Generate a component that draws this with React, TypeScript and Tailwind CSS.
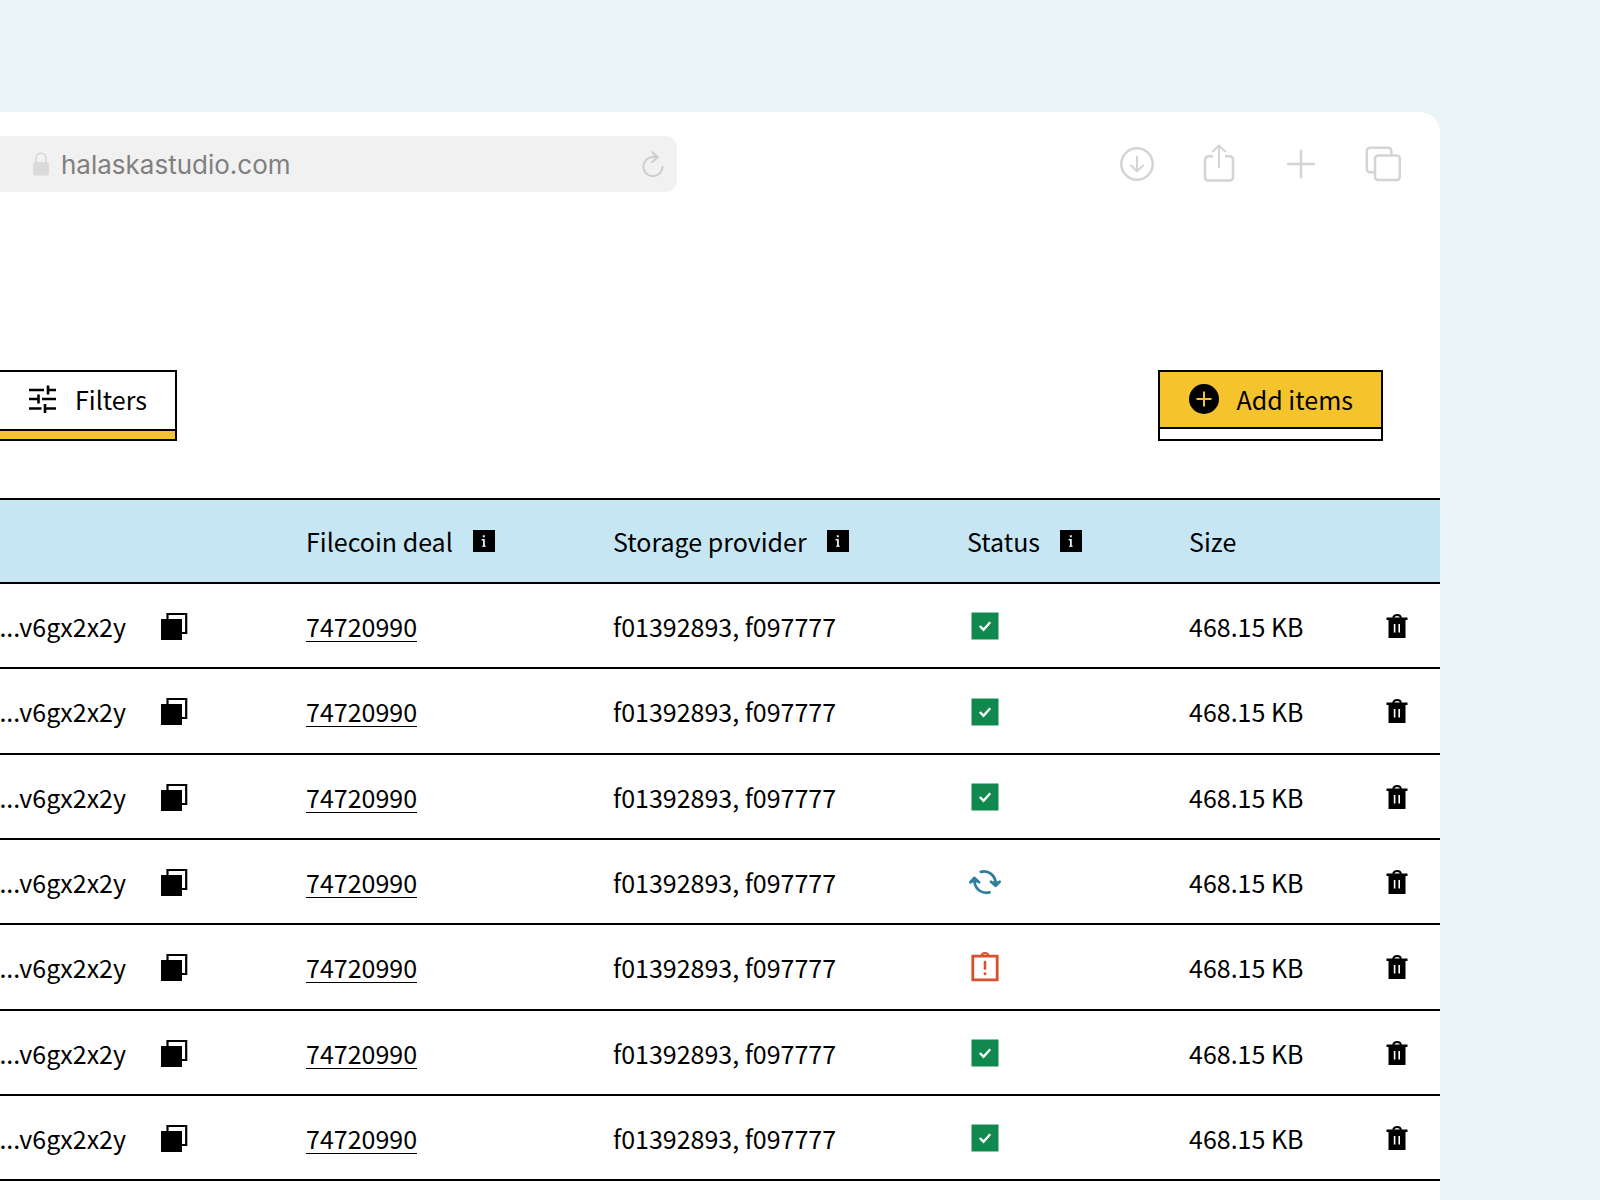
import type { ReactNode } from "react"

type Status = "stored" | "syncing" | "failed"

const ROWS: { id: number; status: Status }[] = [
  { id: 1, status: "stored" },
  { id: 2, status: "stored" },
  { id: 3, status: "stored" },
  { id: 4, status: "syncing" },
  { id: 5, status: "failed" },
  { id: 6, status: "stored" },
  { id: 7, status: "stored" },
]

function ToolButton({ label, children }: { label: string; children: ReactNode }) {
  return (
    <button type="button" aria-label={label} className="text-[#d4d4d4]">
      <svg width="40" height="40" viewBox="0 0 40 40" fill="none" stroke="currentColor"
        strokeWidth="2.5" strokeLinecap="round" strokeLinejoin="round">
        {children}
      </svg>
    </button>
  )
}

function BrowserBar() {
  return (
    <header className="flex items-center justify-between py-6">
      <div className="flex h-14 w-[47%] items-center rounded-r-[12px] bg-[#f1f1f1] pl-[33px] pr-3">
        <svg width="16" height="24" viewBox="0 0 16 24" fill="none" className="shrink-0">
          <path d="M3 11V6.5C3 3.4 5 1.2 8 1.2s5 2.2 5 5.3V11" stroke="#dadada" strokeWidth="1.8" />
          <rect y="10" width="16" height="13.5" rx="2" fill="#dadada" />
        </svg>
        <input aria-label="Address" defaultValue="halaskastudio.com"
          className="ml-3 min-w-0 flex-1 bg-transparent pt-0.5 font-['Inter',sans-serif] text-[26px] leading-8 text-[#808080] outline-none" />
        <button type="button" aria-label="Reload">
          <svg width="24" height="28" viewBox="0 0 24 28" fill="none" stroke="#cdcdcd"
            strokeWidth="2" strokeLinecap="round" strokeLinejoin="round">
            <path d="M21.5 16.8A9.6 9.6 0 1 1 12 7h4.5" />
            <path d="M11.5 2.2l5.2 4.8-5.6 5.2" />
          </svg>
        </button>
      </div>
      <div className="flex gap-[42px] pr-[37px]">
        <ToolButton label="Downloads">
          <circle cx="20" cy="20" r="15.7" />
          <path d="M20 12.5v14.6M14 21.5l6 5.8 6-5.8" strokeWidth="2" />
        </ToolButton>
        <ToolButton label="Share">
          <path d="M14 12.2H9.5A3.5 3.5 0 0 0 6 15.700v17.600a3.200 3.200 0 0 0 3.200 3.200h21.600a3.200 3.200 0 0 0 3.200-3.200V15.700a3.500 3.500 0 0 0-3.500-3.500H26" strokeLinecap="butt" />
          <path d="M20 23.500V1.500M13.800 7.500L20 1.500l6.200 6" strokeWidth="2" />
        </ToolButton>
        <ToolButton label="New tab">
          <path d="M20 7v26M7 20h26" />
        </ToolButton>
        <ToolButton label="Tabs">
          <rect x="12" y="11.500" width="24.800" height="24.600" rx="3" />
          <path d="M11.800 28.200H7A3.200 3.200 0 0 1 3.800 25V7A3.200 3.200 0 0 1 7 3.800h18.200A3.200 3.200 0 0 1 28.400 7v4.200" />
        </ToolButton>
      </div>
    </header>
  )
}

function InfoIcon() {
  return (
    <svg width="22" height="22" viewBox="0 0 22 22" className="shrink-0">
      <path d="M0 0h22v22H0z" />
      <path d="M9.800 5.200h2v2h-2zM8.600 9h3.200v7.600H10v-6H8.600z" fill="#e3f2f9" />
      <path d="M9.200 15.600h3.400v1.200H9.200z" fill="#e3f2f9" />
    </svg>
  )
}

function CopyIcon() {
  return (
    <svg width="28" height="28" viewBox="0 0 28 28">
      <path d="M1 7h21v21H1z" />
      <path d="M7.500 7V2h18.700v19H21" fill="none" stroke="#000" strokeWidth="2.200" />
    </svg>
  )
}

function TrashIcon() {
  return (
    <svg width="22" height="26" viewBox="0 0 22 26">
      <path d="M7.200 5.200C7.200 3.200 9 2 11 2s3.800 1.200 3.800 3.200" fill="none" stroke="#000" strokeWidth="2" />
      <path d="M0.500 4.600h21V7h-2v18h-17V7h-2z" />
      <path d="M8.600 11v8.500M13.200 11v8.500" stroke="#fff" strokeWidth="1.600" />
    </svg>
  )
}

function StatusIcon({ status }: { status: Status }) {
  if (status === "syncing") {
    return (
      <svg width="32" height="26" viewBox="0 0 32 26" fill="none" stroke="#2f7f9c" strokeWidth="2.800"
        strokeLinecap="round" strokeLinejoin="round" role="img" aria-label="Syncing">
        <path d="M11.800 2.800C19.500 1 26.600 6 26.600 15" />
        <path d="M22 12.800l4.600 4 4-4" />
        <path d="M20.500 23.400C12.500 25.200 5.400 20 5.400 11" />
        <path d="M1.400 13.200l4-4.200 4.600 4.200" />
        <path d="M24.500 13.600h4.400l-2.300 2.400zM3.200 12.200h4.600l-2.400-2.600z" />
      </svg>
    )
  }
  if (status === "failed") {
    return (
      <svg width="32" height="30" viewBox="0 0 32 30" fill="none" stroke="#da4f2e" role="img" aria-label="Failed">
        <path d="M3.800 4.200h24.400v23.600H3.800z" strokeWidth="2.800" />
        <path d="M12.800 3.600C12.800 1.800 14 1 16 1s3.200.8 3.200 2.600" strokeWidth="2" />
        <path d="M16 10v6.600" strokeWidth="2.600" strokeLinecap="round" />
        <circle cx="16" cy="21.800" r="1.500" fill="#da4f2e" stroke="none" />
      </svg>
    )
  }
  return (
    <svg width="32" height="29" viewBox="0 0 32 29" fill="none" role="img" aria-label="Stored">
      <path d="M2.500 1.500h27v27h-27z" fill="#10884e" />
      <path d="M10.800 15l3.700 3.700 6.700-7.500" stroke="#fff" strokeWidth="2.400" />
    </svg>
  )
}

function HeadCell({ children, info }: { children: ReactNode; info?: boolean }) {
  return (
    <th scope="col" className="p-0 text-left font-normal">
      <span className="flex items-center gap-5 whitespace-nowrap">
        {children}
        {info && <InfoIcon />}
      </span>
    </th>
  )
}

export default function App() {
  return (
    <div className="flex min-h-screen bg-[#eaf3f6] pt-28 font-['Noto_Sans_CJK_SC',sans-serif] text-[25px] leading-8 text-black">
      <div className="w-[90%] overflow-hidden rounded-tr-[20px] bg-white">
        <BrowserBar />

        <div className="mt-[154px] flex items-start justify-between pr-[57px]">
          <button type="button" className="border-y-2 border-r-2 border-black bg-[#f5c42c] pb-2">
            <span className="flex h-[59px] items-center gap-[19px] border-b-2 border-black bg-white pr-7 pb-[3px] pl-7">
              <svg width="28" height="28" viewBox="0 0 28 28" fill="none" stroke="#000" strokeWidth="2.600">
                <path d="M1 5h15M20 5h8M20 0.500v9M1 14h10M10.500 9.500v9M14 14h14M1 23.500h12.500M17 23.500h11M17 19v9" />
              </svg>
              Filters
            </span>
          </button>
          <button type="button" className="border-2 border-black bg-white pb-[10px]">
            <span className="flex h-[57px] items-center gap-[18px] border-b-2 border-black bg-[#f5c42c] pr-7 pb-px pl-[29px]">
              <svg width="30" height="30" viewBox="0 0 30 30">
                <circle cx="15" cy="15" r="15" />
                <path d="M15 7.500v15M7.500 15h15" stroke="#f5c42c" strokeWidth="2" />
              </svg>
              Add items
            </span>
          </button>
        </div>

        <table className="mt-[57px] w-full table-fixed border-collapse">
          <colgroup>
            <col />
            <col className="w-[307px]" />
            <col className="w-[354px]" />
            <col className="w-[222px]" />
            <col className="w-[197px]" />
            <col className="w-[54px]" />
          </colgroup>
          <thead>
            <tr className="h-[84px] border-y-2 border-black bg-[#c7e6f3]">
              <td />
              <HeadCell info>Filecoin deal</HeadCell>
              <HeadCell info>Storage provider</HeadCell>
              <HeadCell info>Status</HeadCell>
              <HeadCell>Size</HeadCell>
              <td />
            </tr>
          </thead>
          <tbody>
            {ROWS.map(row => (
              <tr key={row.id} className="h-[85px] border-b-2 border-black nth-[3n+2]:h-[86px]">
                <td className="p-0">
                  <div className="flex items-center justify-end gap-[34px] pr-[118px]">
                    ...v6gx2x2y
                    <button type="button" aria-label="Copy CID"><CopyIcon /></button>
                  </div>
                </td>
                <td className="p-0">
                  <a href="#" className="underline decoration-1 underline-offset-4">74720990</a>
                </td>
                <td className="p-0 whitespace-nowrap">f01392893, f097777</td>
                <td className="p-0 pl-0.5"><StatusIcon status={row.status} /></td>
                <td className="p-0 whitespace-nowrap">468.15 KB</td>
                <td className="p-0">
                  <button type="button" aria-label="Delete" className="block"><TrashIcon /></button>
                </td>
              </tr>
            ))}
          </tbody>
        </table>
      </div>
    </div>
  )
}
